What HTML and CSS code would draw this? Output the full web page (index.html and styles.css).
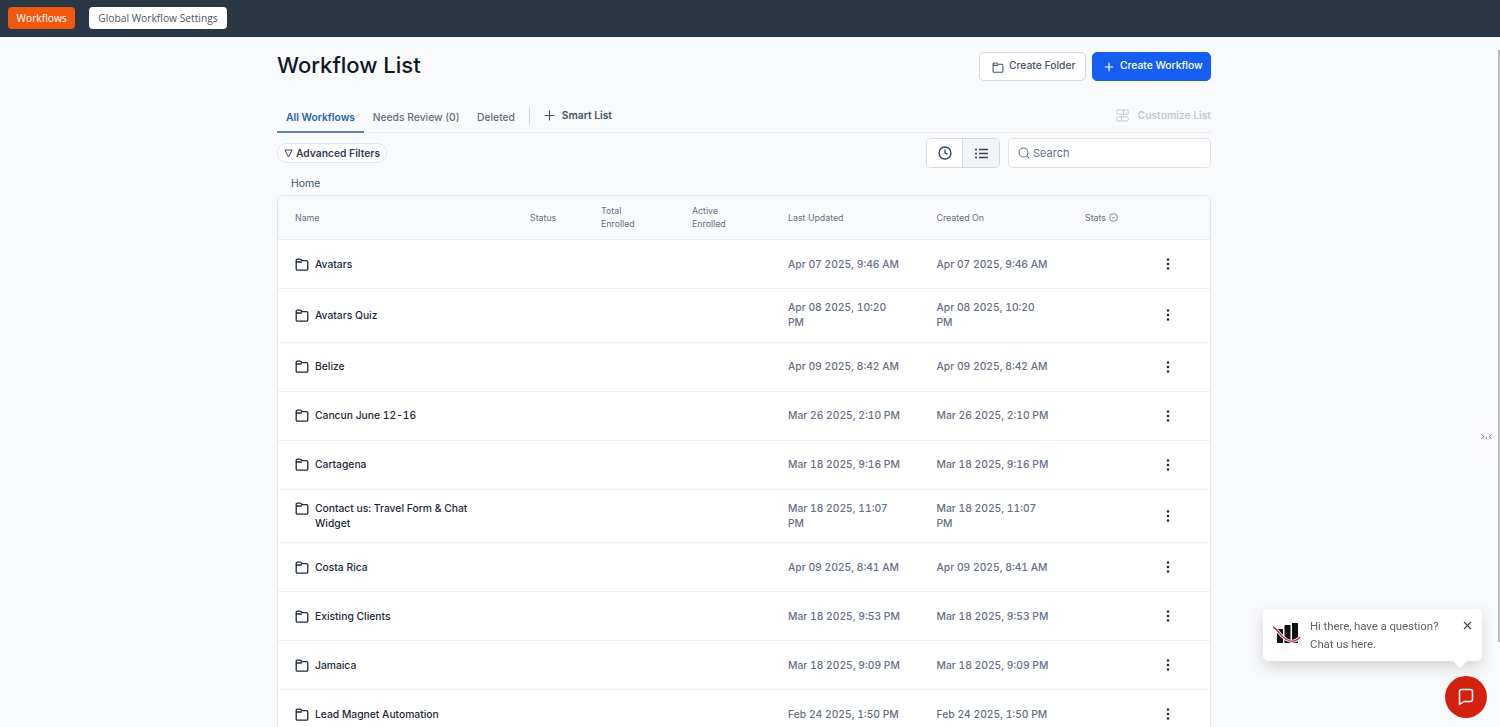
FILE: index.html
```html
<!DOCTYPE html>
<html lang="en">
<head>
    <meta charset="UTF-8">
    <meta name="viewport" content="width=device-width, initial-scale=1.0">
    <title>Workflow List</title>
    <link rel="stylesheet" href="styles.css">
</head>
<body>

    <svg class="icon-defs" width="0" height="0">
        <symbol id="folder" viewBox="0 0 14 13">
            <path d="M1.200 11V2.300c0-.7.5-1.200 1.200-1.200h2.700c.4 0 .7.1.9.4l.9 1.200h4.700c.7 0 1.200.5 1.200 1.200V11c0 .7-.5 1.200-1.200 1.200H2.400c-.7 0-1.200-.5-1.200-1.200z M1.200 4h5.600" fill="none" stroke="currentColor" stroke-width="1.300" stroke-linejoin="round"/>
        </symbol>
        <symbol id="dots" viewBox="0 0 4 12">
            <circle cx="2" cy="1.500" r="1.250" fill="currentColor"/>
            <circle cx="2" cy="6" r="1.250" fill="currentColor"/>
            <circle cx="2" cy="10.500" r="1.250" fill="currentColor"/>
        </symbol>
    </svg>

    <header class="topbar">
        <a class="top-btn top-btn-active">Workflows</a>
        <a class="top-btn">Global Workflow Settings</a>
    </header>

    <main class="container">
        <div class="title-row">
            <h1>Workflow List</h1>
            <div class="title-actions">
                <button class="btn btn-light">
                    <svg class="btn-icon" width="12" height="11"><use href="#folder"/></svg>
                    Create Folder
                </button>
                <button class="btn btn-primary">
                    <svg class="btn-icon" width="10" height="10" viewBox="0 0 10 10"><path d="M5 .8v8.400M.8 5h8.400" stroke="currentColor" stroke-width="1.100"/></svg>
                    Create Workflow
                </button>
            </div>
        </div>

        <nav class="tabs">
            <a class="tab tab-active">All Workflows</a>
            <a class="tab">Needs Review (0)</a>
            <a class="tab">Deleted</a>
            <span class="tab-divider"></span>
            <a class="smart-list">
                <svg width="11" height="11" viewBox="0 0 11 11"><path d="M5.500.5v10M.5 5.500h10" stroke="currentColor" stroke-width="1.100"/></svg>
                Smart List
            </a>
            <a class="customize">
                <svg width="13" height="13" viewBox="0 0 13 13" fill="none" stroke="currentColor"><rect x=".7" y="1" width="11.600" height="4.200" rx="1.500"/><rect x=".7" y="7.800" width="11.600" height="4.200" rx="1.500"/><path d="M7.500 1v4.200M5.500 7.800V12"/></svg>
                Customize List
            </a>
        </nav>

        <div class="toolbar">
            <button class="filter-btn">
                <svg width="9" height="9" viewBox="0 0 9 9"><path d="M.8 1h7.400L4.500 8z" fill="none" stroke="currentColor" stroke-linejoin="round"/></svg>
                Advanced Filters
            </button>
            <div class="view-toggle">
                <span class="view-opt">
                    <svg width="14" height="14" viewBox="0 0 14 14" fill="none" stroke="currentColor" stroke-width="1.300"><circle cx="7" cy="7" r="6"/><path d="M7 3.500V7l2.500 1.200"/></svg>
                </span>
                <span class="view-opt view-opt-on">
                    <svg width="13" height="11" viewBox="0 0 13 11" fill="none" stroke="currentColor" stroke-width="1.400"><path d="M0 1.500h2M4 1.500h9M0 5.500h2M4 5.500h9M0 9.500h2M4 9.500h9"/></svg>
                </span>
            </div>
            <div class="search">
                <svg width="12" height="12" viewBox="0 0 12 12" fill="none" stroke="currentColor" stroke-width="1.100"><circle cx="5.500" cy="5.500" r="4.500"/><path d="M9 9l2.300 2.300"/></svg>
                Search
            </div>
        </div>

        <div class="crumb">Home</div>

        <div class="table-wrap">
            <table class="wf-table">
                <colgroup>
                    <col class="c-name"><col class="c-status"><col class="c-total"><col class="c-active">
                    <col class="c-date"><col class="c-date"><col class="c-stats"><col>
                </colgroup>
                <thead>
                    <tr>
                        <th>Name</th>
                        <th>Status</th>
                        <th>Total<br>Enrolled</th>
                        <th>Active<br>Enrolled</th>
                        <th>Last Updated</th>
                        <th>Created On</th>
                        <th>Stats
                            <svg class="info" width="9" height="9" viewBox="0 0 9 9" fill="none" stroke="currentColor" stroke-width=".8"><circle cx="4.500" cy="4.500" r="3.900"/><path d="M3.200 4.500h2.600"/></svg>
                        </th>
                        <th></th>
                    </tr>
                </thead>
                <tbody>
                    <tr>
                        <td><div class="name"><svg width="14" height="13"><use href="#folder"/></svg>Avatars</div></td>
                        <td></td><td></td><td></td>
                        <td class="date">Apr 07 2025, 9:46 AM</td>
                        <td class="date">Apr 07 2025, 9:46 AM</td>
                        <td></td>
                        <td class="more"><svg width="4" height="12"><use href="#dots"/></svg></td>
                    </tr>
                    <tr>
                        <td><div class="name"><svg width="14" height="13"><use href="#folder"/></svg>Avatars Quiz</div></td>
                        <td></td><td></td><td></td>
                        <td class="date">Apr 08 2025, 10:20 PM</td>
                        <td class="date">Apr 08 2025, 10:20 PM</td>
                        <td></td>
                        <td class="more"><svg width="4" height="12"><use href="#dots"/></svg></td>
                    </tr>
                    <tr>
                        <td><div class="name"><svg width="14" height="13"><use href="#folder"/></svg>Belize</div></td>
                        <td></td><td></td><td></td>
                        <td class="date">Apr 09 2025, 8:42 AM</td>
                        <td class="date">Apr 09 2025, 8:42 AM</td>
                        <td></td>
                        <td class="more"><svg width="4" height="12"><use href="#dots"/></svg></td>
                    </tr>
                    <tr>
                        <td><div class="name"><svg width="14" height="13"><use href="#folder"/></svg>Cancun June 12-16</div></td>
                        <td></td><td></td><td></td>
                        <td class="date">Mar 26 2025, 2:10 PM</td>
                        <td class="date">Mar 26 2025, 2:10 PM</td>
                        <td></td>
                        <td class="more"><svg width="4" height="12"><use href="#dots"/></svg></td>
                    </tr>
                    <tr>
                        <td><div class="name"><svg width="14" height="13"><use href="#folder"/></svg>Cartagena</div></td>
                        <td></td><td></td><td></td>
                        <td class="date">Mar 18 2025, 9:16 PM</td>
                        <td class="date">Mar 18 2025, 9:16 PM</td>
                        <td></td>
                        <td class="more"><svg width="4" height="12"><use href="#dots"/></svg></td>
                    </tr>
                    <tr>
                        <td><div class="name name-wrap"><svg width="14" height="13"><use href="#folder"/></svg><span>Contact us: Travel Form &amp; Chat Widget</span></div></td>
                        <td></td><td></td><td></td>
                        <td class="date">Mar 18 2025, 11:07 PM</td>
                        <td class="date">Mar 18 2025, 11:07 PM</td>
                        <td></td>
                        <td class="more"><svg width="4" height="12"><use href="#dots"/></svg></td>
                    </tr>
                    <tr>
                        <td><div class="name"><svg width="14" height="13"><use href="#folder"/></svg>Costa Rica</div></td>
                        <td></td><td></td><td></td>
                        <td class="date">Apr 09 2025, 8:41 AM</td>
                        <td class="date">Apr 09 2025, 8:41 AM</td>
                        <td></td>
                        <td class="more"><svg width="4" height="12"><use href="#dots"/></svg></td>
                    </tr>
                    <tr>
                        <td><div class="name"><svg width="14" height="13"><use href="#folder"/></svg>Existing Clients</div></td>
                        <td></td><td></td><td></td>
                        <td class="date">Mar 18 2025, 9:53 PM</td>
                        <td class="date">Mar 18 2025, 9:53 PM</td>
                        <td></td>
                        <td class="more"><svg width="4" height="12"><use href="#dots"/></svg></td>
                    </tr>
                    <tr>
                        <td><div class="name"><svg width="14" height="13"><use href="#folder"/></svg>Jamaica</div></td>
                        <td></td><td></td><td></td>
                        <td class="date">Mar 18 2025, 9:09 PM</td>
                        <td class="date">Mar 18 2025, 9:09 PM</td>
                        <td></td>
                        <td class="more"><svg width="4" height="12"><use href="#dots"/></svg></td>
                    </tr>
                    <tr>
                        <td><div class="name"><svg width="14" height="13"><use href="#folder"/></svg>Lead Magnet Automation</div></td>
                        <td></td><td></td><td></td>
                        <td class="date">Feb 24 2025, 1:50 PM</td>
                        <td class="date">Feb 24 2025, 1:50 PM</td>
                        <td></td>
                        <td class="more"><svg width="4" height="12"><use href="#dots"/></svg></td>
                    </tr>
                </tbody>
            </table>
        </div>
    </main>

    <div class="side-tab">
        <svg width="11" height="6" viewBox="0 0 11 6" fill="none" stroke="#77747f" stroke-width="1"><path d="M.5.5l2.500 2-2.500 2M10.500.5L8 2.500l2.500 2M5.500 3.500v1.500"/></svg>
    </div>

    <div class="scroll-thumb"></div>

    <div class="chat-bubble">
        <svg class="chat-logo" width="28" height="22" viewBox="0 0 28 22">
            <rect x="4" y="6" width="6" height="14" fill="#111"/>
            <rect x="11.500" y="2" width="6" height="18" fill="#111"/>
            <rect x="19" y="0" width="6" height="20" fill="#111"/>
            <path d="M0 4c4 2 7 8 10 10 4 4 11 7 17 0" fill="none" stroke="#fff" stroke-width="3"/>
            <path d="M0 4c4 2 7 8 10 10 4 4 11 7 17 0" fill="none" stroke="#c0394b" stroke-width="1.500"/>
        </svg>
        <div class="chat-text">Hi there, have a question?<br>Chat us here.</div>
        <svg class="chat-close" width="9" height="9" viewBox="0 0 9 9"><path d="M1 1l7 7M8 1L1 8" stroke="#444" stroke-width="1.100"/></svg>
    </div>
    <button class="chat-launcher">
        <svg width="20" height="20" viewBox="0 0 20 20" fill="none" stroke="#fff" stroke-width="1.500" stroke-linejoin="round"><path d="M3.500 4.500c0-1.100.9-2 2-2h9c1.100 0 2 .9 2 2v8c0 1.100-.9 2-2 2H8l-4.500 3z"/></svg>
    </button>

</body>
</html>
```

FILE: styles.css
```css
html, body {
    height: 100%;
}

body {
    font-family: Inter, "Liberation Sans", sans-serif;
    margin: 0;
    padding: 0;
    background-color: #f9fafb;
    color: #101828;
    overflow: hidden;
}

.icon-defs {
    position: absolute;
}

.topbar {
    display: flex;
    align-items: center;
    gap: 14px;
    height: 37px;
    padding: 0 8px 1px;
    box-sizing: border-box;
    background-color: #2a3744;
}

.top-btn {
    display: flex;
    align-items: center;
    height: 22px;
    padding: 0 9px;
    background-color: #fff;
    color: #4b5563;
    border-radius: 4px;
    font-family: "Open Sans", sans-serif;
    font-size: 10.250px;
}

.top-btn-active {
    padding: 0 8.500px;
    background-color: #f0590f;
    color: #fff;
}

.container {
    width: 934px;
    margin-left: 277px;
}

.title-row {
    display: flex;
    justify-content: space-between;
    padding-top: 15px;
    height: 44px;
}

h1 {
    margin: 0;
    font-size: 22px;
    line-height: 27px;
    font-weight: 500;
    color: #101828;
}

.title-actions {
    display: flex;
    gap: 6px;
}

.btn {
    display: flex;
    align-items: center;
    gap: 5px;
    height: 29px;
    margin: 0;
    border-radius: 5px;
    font-family: inherit;
    font-size: 10.300px;
    font-weight: 500;
}

.btn-light {
    width: 107px;
    padding: 0 0 4px 12px;
    background-color: #fff;
    border: 1px solid #d5d9e0;
    color: #475467;
}

.btn-light .btn-icon {
    margin-top: 5px;
}

.btn-primary {
    width: 119px;
    padding: 0 0 4px 11px;
    background-color: #155eef;
    border: 1px solid #155eef;
    color: #fff;
}

.btn-primary .btn-icon {
    margin-top: 5px;
    margin-right: 1px;
}

.tabs {
    display: flex;
    align-items: center;
    height: 36px;
    border-bottom: 1px solid #eaecf0;
    font-size: 10.300px;
    font-weight: 600;
}

.tab {
    display: flex;
    align-items: center;
    height: 36px;
    box-sizing: border-box;
    padding: 6px 8.750px 0;
    font-weight: 500;
    color: #667085;
}

.tab-active {
    padding: 6px 9px 0;
    font-weight: 600;
    color: #2a62b0;
    border-bottom: 2px solid #5b86b3;
    margin-bottom: -1px;
}

.tab-divider {
    width: 1px;
    height: 16px;
    margin: 3px 14px 0 5px;
    background-color: #d0d5dd;
}

.smart-list {
    display: flex;
    align-items: center;
    gap: 7px;
    color: #475467;
    margin-top: 2px;
}

.customize {
    display: flex;
    align-items: center;
    gap: 9px;
    margin-left: auto;
    margin-top: 2px;
    color: #c4c9d2;
}

.toolbar {
    display: flex;
    align-items: center;
    height: 30px;
    margin-top: 5px;
}

.filter-btn {
    display: flex;
    align-items: center;
    gap: 3px;
    height: 20px;
    margin: 0 auto 0 0;
    padding: 0 6px;
    background-color: #fff;
    border: 1px solid #e4e7ec;
    border-radius: 10px;
    font-family: inherit;
    font-size: 10.300px;
    font-weight: 600;
    color: #344054;
}

.view-toggle {
    display: flex;
    height: 30px;
    box-sizing: border-box;
    border: 1px solid #d5d9e0;
    border-radius: 5px;
    overflow: hidden;
    color: #344054;
}

.view-opt {
    display: flex;
    align-items: center;
    justify-content: center;
    width: 35px;
    background-color: #fff;
}

.view-opt-on {
    width: 36px;
    border-left: 1px solid #d5d9e0;
    background-color: #f2f4f7;
}

.search {
    display: flex;
    align-items: center;
    gap: 3px;
    width: 203px;
    height: 30px;
    box-sizing: border-box;
    margin-left: 8px;
    padding-left: 9px;
    background-color: #fff;
    border: 1px solid #e0e3e8;
    border-radius: 5px;
    font-size: 11px;
    color: #667085;
}

.crumb {
    margin: 9px 0 0 14px;
    height: 18px;
    line-height: 14px;
    font-size: 10.500px;
    color: #475467;
}

.table-wrap {
    background-color: #fff;
    border: 1px solid #e4e7ec;
    border-bottom: none;
    border-radius: 6px 6px 0 0;
    overflow: hidden;
}

.wf-table {
    width: 100%;
    table-layout: fixed;
    border-collapse: collapse;
}

.c-name { width: 234px; }
.c-status { width: 71px; }
.c-total { width: 91px; }
.c-active { width: 96px; }
.c-date { width: 148.500px; }
.c-stats { width: 83px; }

.wf-table th {
    height: 42px;
    padding: 0 18px 1px;
    background-color: #f9fafb;
    border-bottom: 1px solid #eaecf0;
    text-align: left;
    font-size: 8.800px;
    font-weight: 400;
    line-height: 13px;
    color: #667085;
}

.wf-table th:first-child,
.wf-table td:first-child {
    padding-left: 17px;
}

.wf-table th .info {
    vertical-align: -1.500px;
    margin-left: 1px;
}

.wf-table td {
    height: 48px;
    box-sizing: content-box;
    padding: 0 18px;
    border-bottom: 1px solid #f0f1f4;
    font-size: 10.300px;
    line-height: 15px;
    font-variant-numeric: tabular-nums;
}

.wf-table td.date {
    height: auto;
    padding: 11.250px 17.500px 11.250px 18px;
    color: #667085;
    font-weight: 500;
}

.name {
    display: flex;
    align-items: center;
    gap: 6px;
    font-weight: 500;
    color: #1d2939;
}

.name svg {
    flex: none;
    color: #1d2939;
}

.name-wrap {
    align-items: flex-start;
}

.name-wrap span {
    width: 165px;
}

.name-wrap svg {
    margin-top: 1px;
}

.more {
    color: #1d2939;
}

.more svg {
    display: block;
    margin-left: -2px;
}

.side-tab {
    position: fixed;
    top: 427px;
    right: 2px;
    width: 24px;
    height: 28px;
    box-sizing: border-box;
    padding-top: 7px;
    display: flex;
    justify-content: center;
    background-color: #fbfafd;
}

.scroll-thumb {
    position: fixed;
    top: 50px;
    right: 0;
    width: 2px;
    height: 592px;
    background-color: #b9bbbe;
}

.chat-bubble {
    position: fixed;
    top: 609px;
    left: 1263px;
    display: flex;
    align-items: flex-start;
    box-sizing: border-box;
    width: 219px;
    height: 52px;
    padding: 8px 10px;
    background-color: #fff;
    border-radius: 5px;
    box-shadow: 0 6px 16px rgba(16, 24, 40, .16);
    font-family: Roboto, sans-serif;
    font-size: 11.500px;
    letter-spacing: -.1px;
    line-height: 18px;
    color: #5f646b;
}

.chat-bubble::after {
    content: "";
    position: absolute;
    bottom: -7px;
    right: 14px;
    border-left: 8px solid transparent;
    border-right: 8px solid transparent;
    border-top: 8px solid #fff;
}

.chat-logo {
    flex: none;
    margin: 6px 9px 0 0;
}

.chat-text {
    flex: 1;
    white-space: nowrap;
}

.chat-close {
    flex: none;
    margin-top: 4px;
}

.chat-launcher {
    position: fixed;
    top: 676px;
    left: 1445px;
    display: flex;
    align-items: center;
    justify-content: center;
    width: 42px;
    height: 42px;
    padding: 0;
    border: none;
    border-radius: 50%;
    background-color: #d4200f;
}
```
